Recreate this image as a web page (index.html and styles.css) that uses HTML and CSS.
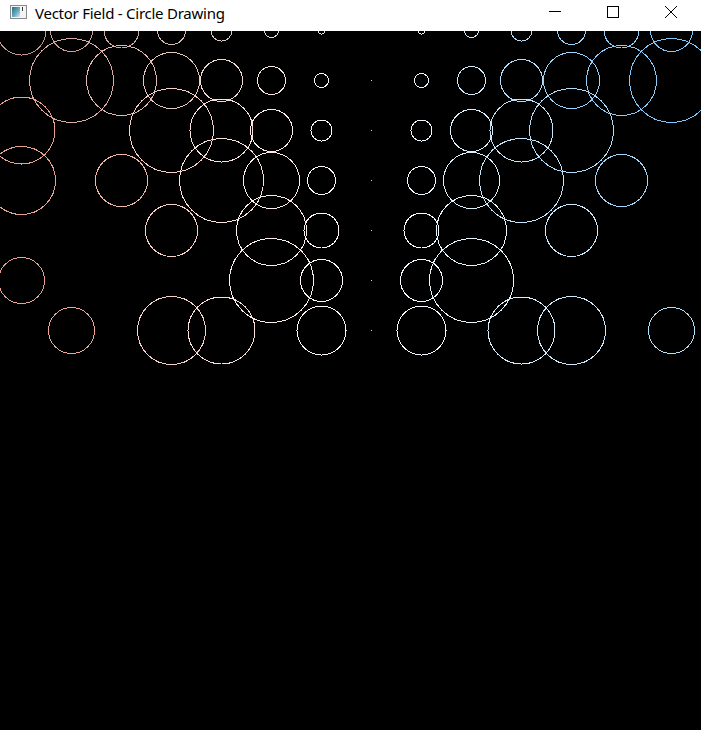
FILE: index.html
```html
<!DOCTYPE html>
<html>
<head>
<meta charset="utf-8">
<title>Vector Field - Circle Drawing</title>
<link rel="stylesheet" href="styles.css">
</head>
<body>
<div class="window">
  <div class="titlebar">
    <svg class="app-icon" width="17" height="14" viewBox="0 0 17 14">
      <defs>
        <linearGradient id="ig" x1="0" y1="0" x2="1" y2="1">
          <stop offset="0" stop-color="#1f6f86"/>
          <stop offset="0.6" stop-color="#6fb0c0"/>
          <stop offset="1" stop-color="#dfeef2"/>
        </linearGradient>
      </defs>
      <rect x="0.5" y="0.5" width="16" height="13" fill="#f4f4f4" stroke="#8a8a8a"/>
      <rect x="2" y="2" width="8" height="10" fill="url(#ig)"/>
      <rect x="12" y="2" width="1" height="4" fill="#3a3a3a"/>
    </svg>
    <span class="title">Vector Field - Circle Drawing</span>
    <div class="caption">
      <div class="cbtn">
        <svg width="12" height="12" viewBox="0 0 12 12"><rect x="0" y="5" width="12" height="1" fill="#000"/></svg>
      </div>
      <div class="cbtn">
        <svg width="12" height="12" viewBox="0 0 12 12"><rect x="0.5" y="0.5" width="11" height="11" fill="none" stroke="#000"/></svg>
      </div>
      <div class="cbtn">
        <svg width="12" height="12" viewBox="0 0 12 12"><path d="M0 0 L12 12 M12 0 L0 12" stroke="#000" stroke-width="1"/></svg>
      </div>
    </div>
  </div>
  <div class="canvas">
    <svg class="field" width="701" height="699" viewBox="0 31 701 699">
      <!-- row 1 -->
      <circle class="a7" cx="21.5" cy="30.5" r="24.5"/>
      <circle class="a6" cx="71.5" cy="30.5" r="21"/>
      <circle class="a5" cx="121.5" cy="30.5" r="17.5"/>
      <circle class="a4" cx="171.5" cy="30.5" r="14"/>
      <circle class="a3" cx="221.5" cy="30.5" r="10.5"/>
      <circle class="a2" cx="271.5" cy="30.5" r="7"/>
      <circle class="a1" cx="321.5" cy="30.5" r="3.5"/>
      <circle class="p1" cx="421.5" cy="30.5" r="3.5"/>
      <circle class="p2" cx="471.5" cy="30.5" r="7"/>
      <circle class="p3" cx="521.5" cy="30.5" r="10.5"/>
      <circle class="p4" cx="571.5" cy="30.5" r="14"/>
      <circle class="p5" cx="621.5" cy="30.5" r="17.5"/>
      <circle class="p6" cx="671.5" cy="30.5" r="21"/>
      <!-- row 2 -->
      <circle class="b6" cx="71.5" cy="80.5" r="42"/>
      <circle class="b5" cx="121.5" cy="80.5" r="35"/>
      <circle class="b4" cx="171.5" cy="80.5" r="28"/>
      <circle class="b3" cx="221.5" cy="80.5" r="21"/>
      <circle class="b2" cx="271.5" cy="80.5" r="14"/>
      <circle class="b1" cx="321.5" cy="80.5" r="7"/>
      <circle class="p1" cx="421.5" cy="80.5" r="7"/>
      <circle class="p2" cx="471.5" cy="80.5" r="14"/>
      <circle class="p3" cx="521.5" cy="80.5" r="21"/>
      <circle class="p4" cx="571.5" cy="80.5" r="28"/>
      <circle class="p5" cx="621.5" cy="80.5" r="35"/>
      <circle class="p6" cx="671.5" cy="80.5" r="42"/>
      <!-- row 3 -->
      <circle class="l7" cx="21.5" cy="130.5" r="33.5"/>
      <circle class="l4" cx="171.5" cy="130.5" r="42"/>
      <circle class="l3" cx="221.5" cy="130.5" r="31.5"/>
      <circle class="l2" cx="271.5" cy="130.5" r="21"/>
      <circle class="l1" cx="321.5" cy="130.5" r="10.5"/>
      <circle class="q1" cx="421.5" cy="130.5" r="10.5"/>
      <circle class="q2" cx="471.5" cy="130.5" r="21"/>
      <circle class="q3" cx="521.5" cy="130.5" r="31.5"/>
      <circle class="q4" cx="571.5" cy="130.5" r="42"/>
      <!-- row 4 -->
      <circle class="l7" cx="21.5" cy="180.5" r="34"/>
      <circle class="l5" cx="121.5" cy="180.5" r="26"/>
      <circle class="l3" cx="221.5" cy="180.5" r="42"/>
      <circle class="l2" cx="271.5" cy="180.5" r="28"/>
      <circle class="l1" cx="321.5" cy="180.5" r="14"/>
      <circle class="q1" cx="421.5" cy="180.5" r="14"/>
      <circle class="q2" cx="471.5" cy="180.5" r="28"/>
      <circle class="q3" cx="521.5" cy="180.5" r="42"/>
      <circle class="q5" cx="621.5" cy="180.5" r="26"/>
      <!-- row 5 -->
      <circle class="l4" cx="171.5" cy="230.5" r="26"/>
      <circle class="l2" cx="271.5" cy="230.5" r="35"/>
      <circle class="l1" cx="321.5" cy="230.5" r="17.5"/>
      <circle class="s1" cx="421.5" cy="230.5" r="17.5"/>
      <circle class="s2" cx="471.5" cy="230.5" r="35"/>
      <circle class="s4" cx="571.5" cy="230.5" r="26"/>
      <!-- row 6 -->
      <circle class="l7" cx="21.5" cy="280.5" r="23"/>
      <circle class="l2" cx="271.5" cy="280.5" r="42"/>
      <circle class="l1" cx="321.5" cy="280.5" r="21"/>
      <circle class="s1" cx="421.5" cy="280.5" r="21"/>
      <circle class="s2" cx="471.5" cy="280.5" r="42"/>
      <!-- row 7 -->
      <circle class="l6" cx="71.5" cy="330.5" r="23"/>
      <circle class="l4" cx="171.5" cy="330.5" r="34"/>
      <circle class="l3" cx="221.5" cy="330.5" r="33.5"/>
      <circle class="l1" cx="321.5" cy="330.5" r="24.5"/>
      <circle class="s1" cx="421.5" cy="330.5" r="24.5"/>
      <circle class="s3" cx="521.5" cy="330.5" r="33.5"/>
      <circle class="s4" cx="571.5" cy="330.5" r="34"/>
      <circle class="s6" cx="671.5" cy="330.5" r="23"/>
      <!-- zero vectors -->
      <rect class="dot" x="371" y="80" width="1" height="1"/>
      <rect class="dot" x="371" y="130" width="1" height="1"/>
      <rect class="dot" x="371" y="180" width="1" height="1"/>
      <rect class="dot" x="371" y="230" width="1" height="1"/>
      <rect class="dot" x="371" y="280" width="1" height="1"/>
      <rect class="dot" x="371" y="330" width="1" height="1"/>
    </svg>
  </div>
</div>
</body>
</html>
```

FILE: styles.css
```css
html, body {
  margin: 0;
  padding: 0;
  background: #000;
}

.window {
  width: 701px;
  height: 730px;
  display: flex;
  flex-direction: column;
  overflow: hidden;
}

.titlebar {
  height: 31px;
  flex: 0 0 31px;
  background: #fff;
  display: flex;
  align-items: flex-start;
}

.app-icon {
  display: block;
  margin: 5px 0 0 10px;
  flex: 0 0 auto;
}

.title {
  margin-left: 8px;
  padding-top: 3px;
  font-family: "Noto Sans", "Open Sans", sans-serif;
  font-size: 15px;
  line-height: 20px;
  color: #000;
  white-space: nowrap;
  letter-spacing: -0.25px;
}

.caption {
  margin-left: auto;
  margin-right: 1px;
  display: flex;
}

.cbtn {
  width: 58px;
  height: 31px;
  display: flex;
  justify-content: center;
  padding-top: 6px;
  box-sizing: border-box;
}

.cbtn svg {
  display: block;
}

.canvas {
  flex: 1 1 auto;
  background: #000;
  border-left: 1px solid #141414;
  margin-left: -1px;
}

.field {
  display: block;
}

.field circle {
  fill: none;
  stroke-width: 1;
  shape-rendering: crispEdges;
}

.dot {
  fill: #dcdcdc;
  shape-rendering: crispEdges;
}

/* left side, top row (dim) */
.a7 { stroke: #c4968c; }
.a6 { stroke: #c89e96; }
.a5 { stroke: #ccaaa4; }
.a4 { stroke: #d4bab4; }
.a3 { stroke: #dcc8c4; }
.a2 { stroke: #e4d8d6; }
.a1 { stroke: #ece6e5; }

/* left side, second row */
.b6 { stroke: #d8aca4; }
.b5 { stroke: #deb8b0; }
.b4 { stroke: #e6c8c0; }
.b3 { stroke: #eed8d2; }
.b2 { stroke: #f4e6e2; }
.b1 { stroke: #faf2f0; }

/* left side, lower rows */
.l7 { stroke: #e8a090; }
.l6 { stroke: #eca696; }
.l5 { stroke: #f0b6a8; }
.l4 { stroke: #f6d0c6; }
.l3 { stroke: #f9e0da; }
.l2 { stroke: #fcecea; }
.l1 { stroke: #fef6f5; }

/* right side, top rows */
.p1 { stroke: #e8f4fe; }
.p2 { stroke: #d0eafc; }
.p3 { stroke: #b4dcfa; }
.p4 { stroke: #9cd2f8; }
.p5 { stroke: #8ccaf8; }
.p6 { stroke: #80c6f8; }

/* right side, middle rows */
.q1 { stroke: #eef7fe; }
.q2 { stroke: #dcf0fc; }
.q3 { stroke: #c4e4fa; }
.q4 { stroke: #b0dcf8; }
.q5 { stroke: #a0d4f8; }

/* right side, lower rows */
.s1 { stroke: #f4faff; }
.s2 { stroke: #e6f4fe; }
.s3 { stroke: #d8eefc; }
.s4 { stroke: #cce8fc; }
.s6 { stroke: #b0e0f8; }
```
